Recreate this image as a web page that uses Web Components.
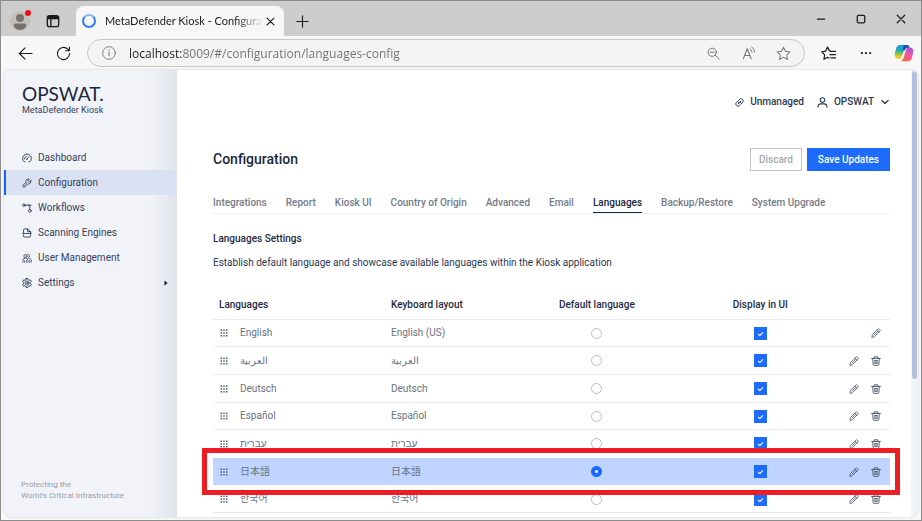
<!DOCTYPE html>
<html lang="en">
<head>
<meta charset="utf-8">
<title>MetaDefender Kiosk - Configuration</title>
<style>
html, body { margin: 0; height: 100%; }
body { font-family: Roboto, "Noto Sans CJK JP", "Noto Sans CJK KR", sans-serif; font-size: 10px; line-height: 14px; color: #2b3850; overflow: hidden; }
</style>
</head>
<body>
<browser-window>
  <browser-tabs slot="tabs" heading="MetaDefender Kiosk - Configurati"></browser-tabs>
  <browser-toolbar slot="toolbar" url="localhost:8009/#/configuration/languages-config"></browser-toolbar>
  <side-nav slot="side">
    <nav-item icon="gauge">Dashboard</nav-item>
    <nav-item icon="wrench" active>Configuration</nav-item>
    <nav-item icon="flow">Workflows</nav-item>
    <nav-item icon="scan">Scanning Engines</nav-item>
    <nav-item icon="users">User Management</nav-item>
    <nav-item icon="gear" expandable>Settings</nav-item>
  </side-nav>
  <config-page>
    <account-bar slot="account"></account-bar>
    <tab-strip slot="tabs">
      <tab-link>Integrations</tab-link>
      <tab-link>Report</tab-link>
      <tab-link>Kiosk UI</tab-link>
      <tab-link>Country of Origin</tab-link>
      <tab-link>Advanced</tab-link>
      <tab-link>Email</tab-link>
      <tab-link active>Languages</tab-link>
      <tab-link>Backup/Restore</tab-link>
      <tab-link>System Upgrade</tab-link>
    </tab-strip>
    <language-table></language-table>
  </config-page>
</browser-window>

<script>
const S = 'fill="none" stroke="currentColor" stroke-linecap="round" stroke-linejoin="round"';
const ICONS = {
  workspace: `<rect x="1.5" y="2" width="13" height="12.5" rx="2.5" ${S} stroke-width="1.5"/><path d="M1.5 6V4.500A2.500 2.500 0 0 1 4 2h8a2.500 2.500 0 0 1 2.500 2.500V6z" fill="currentColor"/><path d="M5.500 6v8.500" ${S} stroke-width="1.5"/>`,
  close: `<path d="M3 3l10 10M13 3L3 13" ${S} stroke-width="1.7"/>`,
  plus: `<path d="M8 1v14M1 8h14" ${S} stroke-width="1.4"/>`,
  min: `<path d="M2 8h12" ${S} stroke-width="2"/>`,
  max: `<rect x="2" y="2" width="12" height="12" rx="2" ${S} stroke-width="2"/>`,
  back: `<path d="M15 8H1.500M7.500 2L1.500 8l6 6" ${S} stroke-width="1.2"/>`,
  reload: `<path d="M14.500 8A6.500 6.500 0 1 1 12.500 3.300L14.300 5M14.300 1v4h-4" ${S} stroke-width="1.2"/>`,
  info: `<circle cx="8" cy="8" r="7.200" ${S} stroke-width="1"/><path d="M8 7.200v4" ${S} stroke-width="1.200"/><circle cx="8" cy="4.800" r=".8" fill="currentColor"/>`,
  zoomout: `<circle cx="6.500" cy="6.500" r="5" ${S} stroke-width="1.200"/><path d="M10.200 10.200L15 15M4 6.500h5" ${S} stroke-width="1.200"/>`,
  read: `<path d="M1.500 14.500L6 3l4.500 11.500M3 10.800h6" ${S} stroke-width="1.200"/><path d="M9.500 3.500a5 5 0 0 1 2 3.500M11 1a8 8 0 0 1 3.500 6" ${S} stroke-width="1.100"/>`,
  star: `<path d="M8 1.300l2.100 4.300 4.700.7-3.400 3.300.8 4.700L8 12.100l-4.200 2.200.8-4.700L1.200 6.300l4.700-.7z" ${S} stroke-width="1.100"/>`,
  favs: `<path d="M10 5.300L9.200 5.200 7 1.200 4.900 5.500.8 6.200 3.900 9.500l-.8 4.700L7 12l1.500.8M10.500 5.800h5M9.500 9.200h6M10.500 12.600h5" ${S} stroke-width="1.300"/>`,
  dots: `<circle cx="2.500" cy="8" r="1.500" fill="currentColor"/><circle cx="8" cy="8" r="1.500" fill="currentColor"/><circle cx="13.500" cy="8" r="1.500" fill="currentColor"/>`,
  copilot: `<defs><linearGradient id="a" x1=".4" y1="0" x2=".3" y2="1"><stop offset="0" stop-color="#1a9be8"/><stop offset=".4" stop-color="#27a9b0"/><stop offset=".65" stop-color="#7cc04a"/><stop offset=".85" stop-color="#f5cf1d"/><stop offset="1" stop-color="#f5b02a"/></linearGradient><linearGradient id="b" x1=".8" y1="0" x2=".2" y2="1"><stop offset="0" stop-color="#a94ee8"/><stop offset=".5" stop-color="#f0569c"/><stop offset="1" stop-color="#f9692f"/></linearGradient></defs><path d="M5 1.500h6.500c-2 0-2.600 1.200-3.200 3L6.600 10c-.5 1.500-1.200 2.500-3 2.500C1 12.500.2 10.500.7 8.200l1-4C2.200 2.500 3 1.500 5 1.500z" fill="url(#a)"/><path d="M7.500 1.500h3c1.300 0 1.700 1 2.100 2.300h-1.300C9.500 3.800 9 5 8.600 6L7 6z" fill="#1c4fc4"/><path d="M11 14.500H4.500c2 0 2.600-1.200 3.200-3L9.400 6c.5-1.500 1.200-2.500 3-2.500 2.600 0 3.400 2 2.900 4.300l-1 4c-.5 1.700-1.300 2.700-3.300 2.700z" fill="url(#b)"/>`,
  gauge: `<path d="M5 14H3.300A7 7 0 1 1 12.700 14H11M4 9.500A4 4 0 0 1 7 5.500M8.500 9L11 6" ${S} stroke-width="1.500"/><circle cx="7.800" cy="9.800" r="1.200" fill="currentColor"/>`,
  wrench: `<path d="M14.200 4.500l-2.600 1.800-2-2L11.500 1.700C9 .8 6.400 2.700 6.400 5.300c0 .5.100 1 .2 1.400L1.700 11.200c-.9.900-.9 2.200 0 3s2.100.8 3 0l4.700-4.800c3 .9 5.600-2 4.800-4.900z" ${S} stroke-width="1.400"/><circle cx="3.700" cy="12.300" r=".8" fill="currentColor"/><path d="M5.500 10.500l3-3" ${S} stroke-width="1"/>`,
  flow: `<circle cx="3" cy="3.500" r="2" ${S} stroke-width="1.500"/><path d="M5 3.500h7.500V10M10 3.500h4.500" ${S} stroke-width="1.500"/><circle cx="12.500" cy="12.500" r="2.200" ${S} stroke-width="1.500"/>`,
  scan: `<path d="M2.500 8.500V2.800C2.500 2 3 1.500 3.800 1.500H9l4.500 4.300v2.700M9 1.500v4.300h4.500M1 8.700h14M2.500 11v2.200c0 .8.500 1.300 1.300 1.300h8.400c.8 0 1.300-.5 1.300-1.300V11" ${S} stroke-width="1.500"/>`,
  users: `<circle cx="5.500" cy="5" r="2.500" ${S} stroke-width="1.400"/><path d="M1.500 14.800V12a4 4 0 0 1 8 0v2.800M4 14.800v-2.500M7.200 14.800v-2.500M9 2.200a2.600 2.600 0 1 1 1.500 5M11 8.500c2.300 0 3.700 1.500 3.700 3.700v2.600M12.200 14.800v-2.500" ${S} stroke-width="1.300"/>`,
  gear: `<path d="M6.500 1h3l.5 1.800 1.500.8 1.900-.5 1.500 2.500-1.300 1.500v1.800l1.300 1.500-1.500 2.500-1.900-.5-1.500.8L9.500 15h-3L6 13.200l-1.500-.8-1.900.5-1.500-2.500 1.300-1.500V7.100L1.100 5.600l1.500-2.500 1.900.5L6 2.800z" ${S} stroke-width="1.600"/><circle cx="8" cy="8" r="3.200" ${S} stroke-width="1.400"/><circle cx="8" cy="8" r=".8" ${S} stroke-width="1.200"/>`,
  caret: `<path d="M4 1l8 7-8 7z" fill="#111c30"/>`,
  link: `<path d="M6.300 4.300l2-2a3.200 3.200 0 0 1 4.500 0l.9.900a3.200 3.200 0 0 1 0 4.500l-2 2M9.700 11.700l-2 2a3.200 3.200 0 0 1-4.500 0l-.9-.9a3.200 3.200 0 0 1 0-4.500l2-2M5.500 10.500l5-5M4.300 6.300l2.500 2.500M9 7l2.700 2.700" ${S} stroke-width="1.700"/>`,
  user: `<circle cx="8" cy="4.500" r="3.300" ${S} stroke-width="1.500"/><path d="M1.500 15v-1.500a4 4 0 0 1 4-3.500h5a4 4 0 0 1 4 3.500V15" ${S} stroke-width="1.500"/>`,
  chevron: `<path d="M3 5.500l5 5 5-5" ${S} stroke-width="2"/>`,
  grip: [2.5, 8, 13.5].map(y => [2.5, 8, 13.5].map(x => `<rect x="${x - 1.5}" y="${y - 1.5}" width="3" height="3" rx=".6" fill="currentColor"/>`).join('')).join(''),
  pencil: `<path d="M1.500 14.500l.7-4L11 1.700c.6-.6 1.400-.6 2 0l1.300 1.300c.6.600.6 1.400 0 2L5.500 13.800zM9.300 3.500l3.200 3.200M11 5.200L5 11.200" ${S} stroke-width="1.300"/>`,
  trash: `<path d="M1 4h14M5 4V1.300h6V4M2.800 4l.6 9.400c.1 1 .7 1.600 1.600 1.600h6c.9 0 1.500-.6 1.600-1.600L13.200 4M6.300 7.300v4.400M9.700 7.300v4.400M6.300 7.300h3.400M6.300 11.700h3.400" ${S} stroke-width="1.500"/>`
};

const define = (name, html, setup) => customElements.define(name, class extends HTMLElement {
  constructor() {
    super();
    this.attachShadow({ mode: 'open' });
  }
  connectedCallback() {
    if (this.shadowRoot.childNodes.length) return;
    const t = document.createElement('template');
    t.innerHTML = typeof html === 'function' ? html(this) : html;
    this.shadowRoot.append(t.content.cloneNode(true));
    if (setup) setup(this);
  }
});

define('ui-icon', el => `
<style>:host{display:block;flex:none;width:${el.getAttribute('size') || 10}px;height:${el.getAttribute('size') || 10}px}svg{display:block;width:100%;height:100%}</style>
<svg viewBox="0 0 16 16" aria-hidden="true">${ICONS[el.getAttribute('name')]}</svg>`);

define('browser-window', `
<style>
:host{display:flex;flex-direction:column;height:100vh;box-sizing:border-box;border:1px solid #8b8b8b;background:#f7f7f7}
.view{flex:1;min-height:0;display:flex;margin:0 3px 3px;border-radius:8px;overflow:hidden;background:#fff;box-shadow:0 0 2px #b9bcc2}
.page{flex:1;min-width:0;overflow:hidden}
.scroll{width:7px;background:#f2f3f8;padding:1px 1px 0;box-sizing:border-box}
.thumb{height:69%;border-radius:3px;background:#b4c0df}
</style>
<slot name="tabs"></slot><slot name="toolbar"></slot>
<div class="view"><slot name="side"></slot><div class="page"><slot></slot></div><div class="scroll"><div class="thumb"></div></div></div>`);

define('browser-tabs', el => `
<style>
:host{display:flex;align-items:flex-end;height:35px;background:#cdcdcd;color:#1b1b1b;font-family:Lato,sans-serif;font-size:11px}
button{border:0;background:none;padding:0;color:inherit;display:grid;place-items:center}
.lead{display:flex;align-self:stretch;align-items:center;width:75px;padding:5px 0 0 9px;box-sizing:border-box;gap:16px}
.avatar{position:relative;width:20px;height:20px;border-radius:50%;background:#c3bfbb}
.avatar svg{width:18px;height:18px}
.avatar i{position:absolute;right:-1px;top:-1px;width:6px;height:6px;border-radius:50%;background:#e3101c}
.tab{display:flex;align-items:center;height:30px;width:208px;box-sizing:border-box;padding:0 8px 0 6px;border-radius:8px 8px 0 0;background:#f7f7f7}
.ring{width:10px;height:10px;border:2px solid #2f7bf6;border-top-color:#8db7fb;border-radius:50%;flex:none}
.name{flex:1;min-width:0;margin:0 2px 0 9px;white-space:nowrap;mask-image:linear-gradient(90deg,#000 132px,transparent 158px)}
.new{width:36px;height:30px}
.win{margin-left:auto;align-self:stretch;display:flex}
.win button{width:40px}
</style>
<div class="lead"><button class="avatar" aria-label="Profile"><svg viewBox="0 0 18 18"><circle cx="9" cy="6" r="4" fill="#77726f"/><path d="M2.500 14c0-2 1.500-2.500 3-2.500h7c1.500 0 3 .5 3 2.500-1.500 2.500-4 4-6.500 4s-5-1.500-6.500-4z" fill="#77726f"/></svg><i></i></button>
<button aria-label="Workspaces"><ui-icon name="workspace" size="14"></ui-icon></button></div>
<div class="tab"><span class="ring"></span><span class="name">${el.getAttribute('heading')}</span><button aria-label="Close tab"><ui-icon name="close" size="11"></ui-icon></button></div>
<button class="new" aria-label="New tab"><ui-icon name="plus" size="13"></ui-icon></button>
<div class="win"><button aria-label="Minimize"><ui-icon name="min" size="10"></ui-icon></button><button aria-label="Maximize"><ui-icon name="max" size="10"></ui-icon></button><button aria-label="Close"><ui-icon name="close" size="12"></ui-icon></button></div>`);

define('browser-toolbar', el => `
<style>
:host{display:flex;align-items:center;height:34px;color:#1b1b1b}
button{border:0;background:none;padding:0;color:inherit;display:grid;place-items:center;height:26px}
.go{display:flex;padding:0 8px;gap:6px}
.go button{width:32px}
.bar{flex:1;min-width:0;display:flex;align-items:center;height:26px;border:1px solid #c6c6c6;border-radius:14px;background:#f4f4f4;color:#757575;padding:0 3px 0 14px}
input{flex:1;min-width:0;border:0;outline:0;padding:1px 0 0;margin-left:13px;font:12px/18px "Open Sans",sans-serif;color:transparent;background:linear-gradient(90deg,#1c1c1c 53px,#707070 53px);-webkit-background-clip:text;background-clip:text}
.bar button{width:35px}
.more{display:flex;gap:4px;margin-left:6px}
.more button{width:34px}
</style>
<div class="go"><button aria-label="Back"><ui-icon name="back" size="15"></ui-icon></button><button aria-label="Reload"><ui-icon name="reload" size="15"></ui-icon></button></div>
<div class="bar"><ui-icon name="info" size="14"></ui-icon><input aria-label="Address" value="${el.getAttribute('url')}"><button aria-label="Zoom out"><ui-icon name="zoomout" size="13"></ui-icon></button><button aria-label="Read aloud"><ui-icon name="read" size="14"></ui-icon></button><button aria-label="Add to favorites"><ui-icon name="star" size="15"></ui-icon></button></div>
<div class="more"><button aria-label="Favorites"><ui-icon name="favs" size="15"></ui-icon></button><button aria-label="More"><ui-icon name="dots" size="12"></ui-icon></button><button aria-label="Copilot"><ui-icon name="copilot" size="20"></ui-icon></button></div>`);

define('side-nav', `
<style>
:host{display:flex;flex-direction:column;width:173px;flex:none;background:linear-gradient(90deg,#f1f3f9 84%,#e1e4eb);color:#34425b}
.brand{box-sizing:border-box;height:75px;padding:12px 0 0 18px}
.logo{font:400 19px/23px Lato,sans-serif;color:#1b273d}
.sub{font-size:9px;line-height:11px}
footer{margin-top:auto;padding:0 17px 16px;font-size:8px;line-height:11px;color:#959ca9}
</style>
<div class="brand"><div class="logo">OPSWAT.</div><div class="sub">MetaDefender Kiosk</div></div>
<nav><slot></slot></nav>
<footer>Protecting the<br>World's Critical Infrastructure</footer>`);

define('nav-item', el => `
<style>
:host{display:block}
a{display:flex;align-items:center;gap:6px;height:24px;padding:1px 8px 0 16px;border-left:2px solid transparent;color:inherit;text-decoration:none}
:host([active]) a{background:#dae1f2;border-color:#1463ff}
span{flex:1}
</style>
<a href="#${el.getAttribute('icon')}"><ui-icon name="${el.getAttribute('icon')}" size="10"></ui-icon><span><slot></slot></span>${el.hasAttribute('expandable') ? '<ui-icon name="caret" size="6"></ui-icon>' : ''}</a>`);

define('config-page', `
<style>
:host{display:block;padding:23px 21px 0 36px}
.head{display:flex;align-items:center;gap:5px;margin:37px 0 23px}
h1{flex:1;margin:0;padding-bottom:2px;font-size:14px;line-height:20px;font-weight:500;color:#1b273d}
button{height:23px;padding:0 8px;border:1px solid #c3c7cd;background:#fff;color:#a5abb5;font:500 10px/14px Roboto,sans-serif}
.save{background:#1d6bfc;border-color:#1d6bfc;color:#fff;padding:0 10px}
h2{margin:18px 0 10px;font-size:10px;line-height:14px;font-weight:500;color:#1f2b43}
p{margin:0 0 20px}
</style>
<slot name="account"></slot>
<div class="head"><h1>Configuration</h1><button>Discard</button><button class="save">Save Updates</button></div>
<slot name="tabs"></slot>
<h2>Languages Settings</h2>
<p>Establish default language and showcase available languages within the Kiosk application</p>
<slot></slot>`);

define('account-bar', `
<style>
:host{display:flex;justify-content:flex-end;gap:13px}
button{display:flex;align-items:center;gap:6px;height:18px;border:0;padding:0;background:none;color:#2b3850;font:500 10px/14px Roboto,sans-serif}
</style>
<button><ui-icon name="link" size="9"></ui-icon>Unmanaged</button>
<button><ui-icon name="user" size="11"></ui-icon>OPSWAT<ui-icon name="chevron" size="10"></ui-icon></button>`);

define('tab-strip', `
<style>:host{display:flex;gap:19px;border-bottom:1px solid #eceef1}</style><slot></slot>`);

define('tab-link', el => `
<style>
:host{display:block;color:#737b89;font-weight:500;white-space:nowrap}
a{display:block;height:18px;line-height:18px;color:inherit;text-decoration:none;border-bottom:1px solid transparent}
:host([active]){color:#1b273d}
:host([active]) a{border-color:#1b273d}
</style>
<a href="#tab"><slot></slot></a>`);

const LANGS = [
  ['en', 'English', 'English (US)'], ['ar', 'العربية'], ['de', 'Deutsch'], ['es', 'Español'],
  ['he', 'עברית'], ['ja', '日本語'], ['ko', '한국어']
];
define('language-table', () => `
<style>
:host{display:block}
table{width:100%;table-layout:fixed;border-spacing:0}
.c1{width:25.4%}.c2{width:18.8%}.c3{width:25%}.c4{width:23.3%}
th{height:29px;padding:0 6px;text-align:left;font-weight:500;color:#1f2b43;white-space:nowrap}
td{height:27px;padding:0 6px;color:#6a7382}
th,td{border-bottom:1px solid #e9ebee}
tr:nth-child(3n+1) td{height:26px}
.mid{text-align:center}
.name{display:flex;align-items:center;gap:12px;padding-left:1px}
ui-icon{color:#4a566a}
.act{display:flex;justify-content:flex-end;gap:12px;padding:0 3px}
.act button{display:block;border:0;padding:0;background:none}
input{appearance:none;display:block;box-sizing:border-box;margin:0 auto;background:#fff}
[type=radio]{width:11px;height:11px;border:1px solid #b9bec6;border-radius:50%}
[type=radio]:checked{border:4px solid #1769ff}
[type=checkbox]{width:13px;height:13px;background:#1d6bfc;display:grid;place-items:center}
[type=checkbox]::before{content:"";width:4px;height:2px;border:solid #fff;border-width:0 0 1px 1px;transform:rotate(-45deg)}
.chosen{position:relative}
.chosen td{background:#bfd5ff;border-color:#bfd5ff}
.mark{position:absolute;inset:-10px -10px -9px -11px;border:5px solid #ee1c25;box-shadow:inset 0 0 0 5px #fff;pointer-events:none}
</style>
<table>
<colgroup><col class="c1"><col class="c2"><col class="c3"><col class="c4"><col></colgroup>
<thead><tr><th>Languages</th><th>Keyboard layout</th><th class="mid">Default language</th><th class="mid">Display in UI</th><th aria-label="Actions"></th></tr></thead>
<tbody>${LANGS.map(([code, name, layout]) => `
<tr${code === 'ja' ? ' class="chosen"' : ''}>
<td><div class="name"><ui-icon name="grip" size="8"></ui-icon><bdi lang="${code}">${name}</bdi></div></td>
<td><bdi lang="${code}">${layout || name}</bdi></td>
<td><input type="radio" name="default" aria-label="Default language: ${name}"${code === 'ja' ? ' checked' : ''}></td>
<td><input type="checkbox" aria-label="Display ${name}" checked></td>
<td>${code === 'ja' ? '<div class="mark"></div>' : ''}<div class="act"><button aria-label="Edit ${name}"><ui-icon name="pencil" size="10"></ui-icon></button>${code === 'en' ? '' : `<button aria-label="Delete ${name}"><ui-icon name="trash" size="10"></ui-icon></button>`}</div></td>
</tr>`).join('')}</tbody>
</table>`);
</script>
</body>
</html>
